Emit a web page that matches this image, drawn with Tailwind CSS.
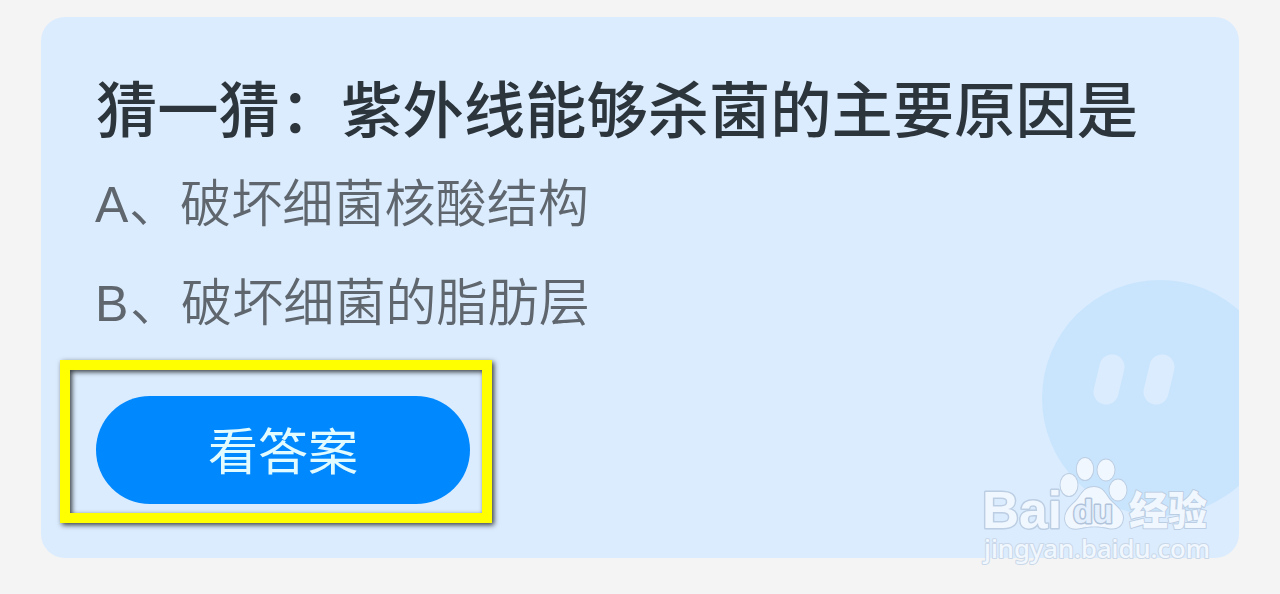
<!DOCTYPE html>
<html lang="zh-CN">
<head>
    <meta charset="UTF-8">
    <meta name="viewport" content="width=device-width, initial-scale=1.0">
    <title>猜一猜</title>
    <script src="https://cdn.jsdelivr.net/npm/@tailwindcss/browser@4"></script>
</head>
<body class="bg-[#f4f4f4] h-[594px] overflow-hidden pt-[17px] pl-[41px] font-['Noto_Sans_CJK_SC',sans-serif]">
    <!-- Question card -->
    <main class="relative w-[1198px] h-[541px] rounded-[24px] bg-[#dbecfe] overflow-hidden pl-[55px] pt-[54px]">
        <!-- Smiley decoration -->
        <svg class="absolute left-[998px] top-[260px]" width="200" height="240" viewBox="0 0 200 240">
            <circle cx="121" cy="121" r="118" fill="#c9e5fd"/>
            <g stroke="#dbecfe" stroke-width="25" stroke-linecap="round">
                <path d="M73 90L67 115"/>
                <path d="M123 90L117 115"/>
            </g>
        </svg>

        <h1 class="text-[61.3px] leading-[72px] font-medium text-[#2d353c] whitespace-nowrap">猜一猜：紫外线能够杀菌的主要原因是</h1>
        <ul class="pt-[8px] text-[51.1px] leading-[98px] font-[350] text-[#5f666d] whitespace-nowrap">
            <li class="h-[99px] flex items-baseline"><span class="w-[34px] shrink-0 -ml-px font-['Liberation_Sans',sans-serif] text-[50px]">A</span>、破坏细菌核酸结构</li>
            <li class="h-[99px] flex items-baseline"><span class="w-[35px] shrink-0 -ml-px font-['Liberation_Sans',sans-serif] text-[50px]">B</span>、破坏细菌的脂肪层</li>
        </ul>
        <button class="block mt-[47px] w-[374px] h-[108px] rounded-full bg-[#0088ff] pb-[4px] text-[50px] leading-[104px] text-[#e2fbff] font-normal">看答案</button>
    </main>

    <!-- Highlight box around the button -->
    <div class="absolute left-[60px] top-[360px] w-[432px] h-[163px] border-10 border-[#ffff00] shadow-[2px_2px_5px_rgba(0,0,0,0.75),inset_2px_2px_5px_rgba(0,0,0,0.75)]"></div>

    <!-- Watermark -->
    <svg class="absolute left-[970px] top-[450px]" width="260" height="124" viewBox="0 0 260 124">
        <g fill="#f1f7fe" stroke="#bccee3" stroke-width="2" stroke-linejoin="round" paint-order="stroke">
            <text x="12" y="78" font-family="Liberation Sans, sans-serif" font-weight="bold" font-size="52" textLength="80" lengthAdjust="spacingAndGlyphs" stroke-width="3">Bai</text>
            <ellipse cx="99" cy="35" rx="8.5" ry="11"/>
            <ellipse cx="115" cy="19" rx="8.2" ry="11"/>
            <ellipse cx="136" cy="20" rx="8.5" ry="10.5"/>
            <ellipse cx="148" cy="40" rx="8.5" ry="10.5"/>
            <path d="M124 37C113 37 111 46 106 51C100 57 95 61 95 69C96 78 103 80 111 78C119 76 130 76 138 78C147 80 153 76 153 67C152 60 146 56 141 51C136 46 134 37 124 37Z"/>
            <text x="103" y="73" font-family="Liberation Sans, sans-serif" font-weight="bold" font-size="33" textLength="40" lengthAdjust="spacingAndGlyphs" fill="#e3effc" stroke="#b0c3da" stroke-width="3">du</text>
            <text x="159" y="75" font-family="Noto Sans CJK SC, sans-serif" font-weight="900" font-size="40" textLength="78" lengthAdjust="spacingAndGlyphs">经验</text>
            <text x="14" y="108" font-family="Noto Sans, sans-serif" font-weight="500" font-size="26" textLength="226" lengthAdjust="spacingAndGlyphs" stroke="#c9d7e8">jingyan.baidu.com</text>
        </g>
    </svg>
</body>
</html>
